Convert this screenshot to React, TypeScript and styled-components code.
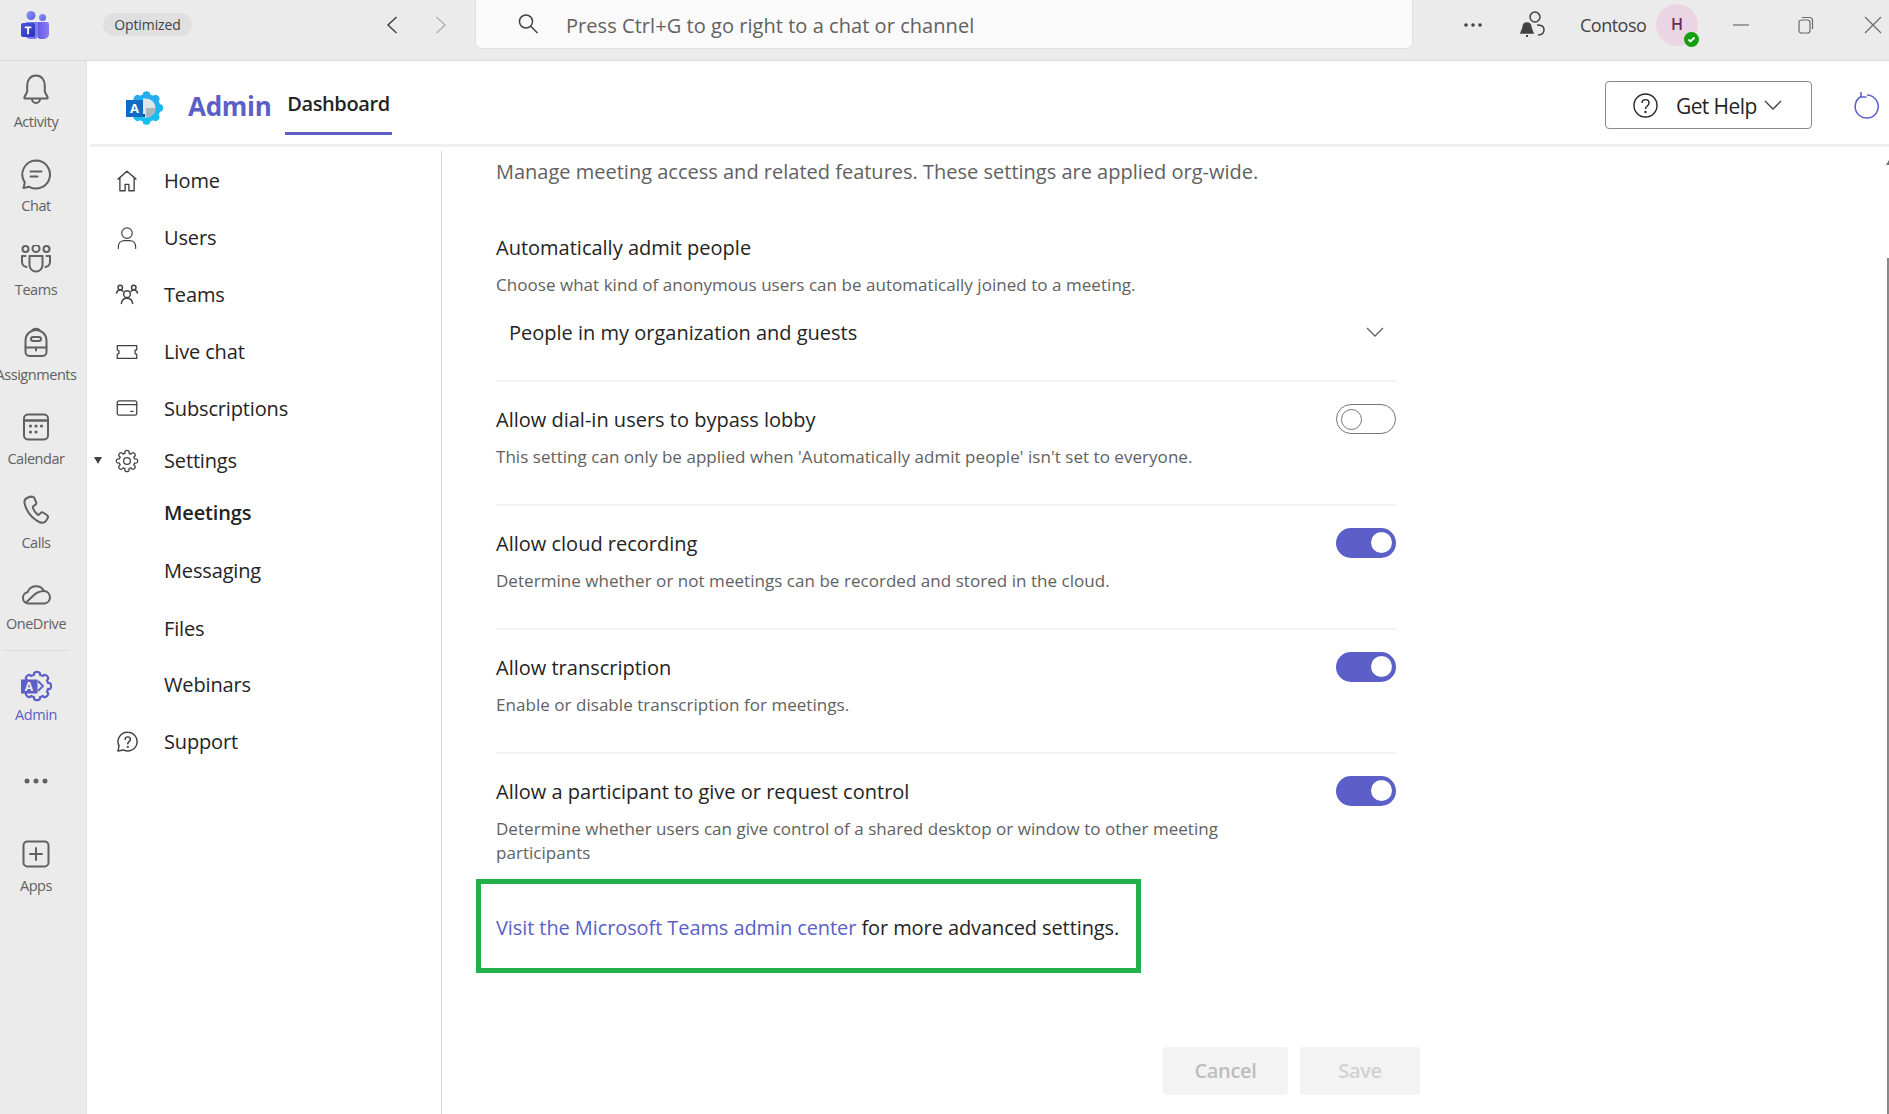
import styled, { createGlobalStyle } from "styled-components";
import { ReactNode } from "react";

const FONT = `"Open Sans", "Noto Sans", sans-serif`;
const BRAND = "#5b5fc7";

//#region styles
const GlobalStyle = createGlobalStyle`
  html, body {
    margin: 0;
    padding: 0;
    height: 100%;
    overflow: hidden;
    background: #ffffff;
  }
  #root {
    height: 100%;
  }
  * {
    box-sizing: border-box;
  }
`;

const Page = styled.div`
  width: 1889px;
  height: 1114px;
  position: relative;
  display: flex;
  flex-direction: column;
  overflow: hidden;
  font-family: ${FONT};
  background: #fff;
`;

const TitleBar = styled.header`
  height: 61px;
  flex: none;
  display: flex;
  align-items: flex-start;
  background: #ebebeb;
  border-bottom: 1px solid #dcdcdc;
`;

const BarSlot = styled.div<{ $ml: number; $w: number }>`
  flex: none;
  margin-left: ${(p) => p.$ml}px;
  width: ${(p) => p.$w}px;
  height: 50px;
  display: flex;
  align-items: center;
  justify-content: center;
  color: #424242;
`;

const Pill = styled.div`
  flex: none;
  margin: 13px 0 0 53px;
  width: 89px;
  height: 23px;
  border-radius: 12px;
  background: #e0e0e0;
  color: #424242;
  font-size: 14px;
  line-height: 23px;
  letter-spacing: -0.1px;
  text-align: center;
`;

const SearchBox = styled.div`
  flex: none;
  margin-left: 26px;
  width: 938px;
  height: 49px;
  display: flex;
  align-items: center;
  padding-left: 41px;
  gap: 27px;
  background: #fafafa;
  border: 1px solid #e0e0e0;
  border-top: none;
  border-radius: 0 0 6px 6px;
  color: #616161;
  font-size: 20px;
  letter-spacing: 0.05px;
`;

const SearchText = styled.span`
  margin-top: 2px;
`;

const Tenant = styled.div`
  flex: none;
  margin-left: 34px;
  width: 68px;
  height: 50px;
  line-height: 50px;
  color: #424242;
  font-size: 18px;
  letter-spacing: -0.5px;
`;

const Avatar = styled.div`
  flex: none;
  position: relative;
  margin: 4px 0 0 8px;
  width: 42px;
  height: 42px;
  border-radius: 50%;
  background: #ecd5e3;
  color: #6b2a5a;
  font-size: 16px;
  font-weight: 600;
  line-height: 40px;
  text-align: center;
`;

const PresenceBadge = styled.div`
  position: absolute;
  right: -1px;
  bottom: -1px;
  width: 15px;
  height: 15px;
  border-radius: 50%;
  background: #13a10e;
  display: flex;
  align-items: center;
  justify-content: center;
`;

const Body = styled.div`
  flex: 1;
  min-height: 0;
  display: flex;
`;

const Rail = styled.nav`
  flex: none;
  width: 87px;
  padding-right: 15px;
  background: #ebebeb;
  border-right: 1px solid #e0e0e0;
  display: flex;
  flex-direction: column;
`;

const RailItem = styled.div<{ $h?: number; $active?: boolean; $iconTop?: number }>`
  height: ${(p) => p.$h ?? 84}px;
  width: 72px;
  flex: none;
  display: flex;
  flex-direction: column;
  align-items: center;
  color: ${(p) => (p.$active ? BRAND : "#616161")};
  svg {
    flex: none;
    margin-top: ${(p) => p.$iconTop ?? 14}px;
  }
`;

const RailLabel = styled.span<{ $gap?: number }>`
  margin-top: ${(p) => p.$gap ?? 5}px;
  font-size: 14.5px;
  line-height: 20px;
  letter-spacing: -0.45px;
  white-space: nowrap;
`;

const RailDivider = styled.div`
  flex: none;
  height: 1px;
  width: 66px;
  margin: 0 3px 7px;
  background: #dcdcdc;
`;

const Main = styled.div`
  flex: 1;
  min-width: 0;
  display: flex;
  flex-direction: column;
`;

const AppHeader = styled.div`
  flex: none;
  height: 86px;
  margin-left: 3px;
  display: flex;
  align-items: flex-start;
  border-bottom: 3px solid #f0f0f0;
`;

const AppLogo = styled.div`
  flex: none;
  margin: 30px 0 0 36px;
  width: 38px;
  height: 34px;
`;

const AppName = styled.div`
  flex: none;
  margin: 26px 0 0 24px;
  width: 97px;
  color: ${BRAND};
  font-size: 26px;
  font-weight: 700;
  line-height: 38px;
  letter-spacing: -0.3px;
`;

const Tab = styled.div`
  flex: none;
  width: 107px;
  height: 74px;
  padding-top: 25px;
  color: #242424;
  font-size: 20px;
  font-weight: 600;
  line-height: 36px;
  letter-spacing: -0.4px;
  text-align: center;
  border-bottom: 3px solid ${BRAND};
`;

const HelpButton = styled.div`
  flex: none;
  margin: 20px 0 0 auto;
  width: 207px;
  height: 48px;
  display: flex;
  align-items: center;
  padding-left: 27px;
  border: 1px solid #8a8a8a;
  border-radius: 4px;
  color: #242424;
  font-size: 21px;
  letter-spacing: -0.6px;
`;

const HelpLabel = styled.span`
  margin: 2px 7px 0 18px;
`;

const RefreshSlot = styled.div`
  flex: none;
  margin: 30px 9px 0 42px;
  width: 26px;
  height: 28px;
  color: ${BRAND};
`;

const Workspace = styled.div`
  flex: 1;
  min-height: 0;
  display: flex;
`;

const SideNav = styled.nav`
  flex: none;
  width: 355px;
  margin-top: 4px;
  padding-top: 1px;
  border-right: 1px solid #d6d6d6;
  display: flex;
  flex-direction: column;
`;

const NavRow = styled.div<{ $h?: number; $bold?: boolean }>`
  flex: none;
  height: ${(p) => p.$h ?? 57}px;
  display: grid;
  grid-template-columns: 28px 24px 1fr;
  align-items: center;
  color: #242424;
  font-size: 20px;
  font-weight: ${(p) => (p.$bold ? 600 : 400)};
  letter-spacing: -0.15px;
`;

const NavCaret = styled.span`
  justify-self: end;
  margin-right: 13px;
  width: 0;
  height: 0;
  border-left: 4px solid transparent;
  border-right: 4px solid transparent;
  border-top: 7px solid #424242;
`;

const NavIcon = styled.span`
  display: flex;
  align-items: center;
  justify-content: center;
  color: #424242;
`;

const NavText = styled.span`
  margin-left: 25px;
`;

const Content = styled.main`
  flex: none;
  width: 900px;
  margin-left: 54px;
  display: flex;
  flex-direction: column;
`;

const Intro = styled.p`
  margin: 9px 0 0;
  color: #616161;
  font-size: 20px;
  line-height: 32px;
`;

const SettingBlock = styled.section<{ $top?: number; $bottom?: number; $divider?: boolean }>`
  flex: none;
  padding: ${(p) => p.$top ?? 24}px 0 ${(p) => p.$bottom ?? 35}px;
  border-bottom: ${(p) => (p.$divider === false ? "none" : "2px solid #f3f3f3")};
`;

const SettingHead = styled.div`
  display: flex;
  align-items: center;
  justify-content: space-between;
  height: 28px;
`;

const SettingTitle = styled.h3`
  margin: 0;
  color: #242424;
  font-size: 20px;
  font-weight: 400;
  line-height: 28px;
`;

const SettingDesc = styled.p`
  margin: 11px 0 0;
  max-width: 740px;
  color: #616161;
  font-size: 17px;
  line-height: 24px;
  letter-spacing: 0.04px;
`;

const Select = styled.div`
  margin-top: 11px;
  height: 48px;
  display: flex;
  align-items: center;
  justify-content: space-between;
  padding: 0 12px 0 13px;
  color: #242424;
  font-size: 20px;
`;

const Toggle = styled.div<{ $on?: boolean }>`
  flex: none;
  width: 60px;
  height: 30px;
  margin-top: -2px;
  border-radius: 15px;
  padding: 4px 4px;
  display: flex;
  justify-content: ${(p) => (p.$on ? "flex-end" : "flex-start")};
  background: ${(p) => (p.$on ? BRAND : "#fff")};
  border: ${(p) => (p.$on ? "none" : "1.5px solid #757575")};
`;

const ToggleKnob = styled.span<{ $on?: boolean }>`
  width: 21px;
  height: 21px;
  border-radius: 50%;
  background: ${(p) => (p.$on ? "#fff" : "transparent")};
  border: ${(p) => (p.$on ? "none" : "1.5px solid #757575")};
  margin-top: ${(p) => (p.$on ? 0 : -0.5)}px;
`;

const Callout = styled.div`
  flex: none;
  margin: 14px 0 0 -20px;
  width: 665px;
  height: 94px;
  display: flex;
  align-items: center;
  padding: 2px 0 0 15px;
  border: 5px solid #22b14c;
  color: #242424;
  font-size: 20px;
  letter-spacing: -0.09px;
  white-space: pre;
`;

const CalloutLink = styled.a`
  color: ${BRAND};
`;

const ActionRow = styled.div`
  flex: none;
  margin: 74px -24px 0 0;
  display: flex;
  justify-content: flex-end;
  gap: 12px;
`;

const ActionButton = styled.div<{ $w: number; $faint?: boolean }>`
  width: ${(p) => p.$w}px;
  height: 48px;
  border-radius: 4px;
  background: #f3f3f3;
  color: ${(p) => (p.$faint ? "#d1d1d1" : "#bdbdbd")};
  font-size: 20px;
  font-weight: 600;
  line-height: 47px;
  letter-spacing: -0.3px;
  text-align: center;
`;

const ScrollThumb = styled.div`
  position: absolute;
  right: 0;
  top: 258px;
  bottom: 0;
  width: 2px;
  background: #8a8a8a;
`;

const ScrollArrow = styled.div`
  position: absolute;
  right: 0;
  top: 160px;
  width: 0;
  height: 0;
  border-left: 3px solid transparent;
  border-bottom: 5px solid #6e6e6e;
`;
//#endregion styles

// cog outline, used by the settings and admin icons
function gearPath(cx: number, cy: number, outer: number, inner: number, teeth: number) {
  const step = (Math.PI * 2) / teeth;
  const pts: string[] = [];
  for (let i = 0; i < teeth; i++) {
    const a = i * step - Math.PI / 2;
    const at = (r: number, d: number) => `${(cx + r * Math.cos(a + d)).toFixed(2)} ${(cy + r * Math.sin(a + d)).toFixed(2)}`;
    pts.push(`${i === 0 ? "M" : "L"}${at(inner, -step * 0.34)}`);
    pts.push(`Q${at(outer, -step * 0.3)} ${at(outer, -step * 0.12)}`);
    pts.push(`Q${at(outer + 0.5, 0)} ${at(outer, step * 0.12)}`);
    pts.push(`Q${at(outer, step * 0.3)} ${at(inner, step * 0.34)}`);
  }
  return pts.join(" ") + "Z";
}

function Icon({ size = 32, sw = 2, children }: { size?: number; sw?: number; children: ReactNode }) {
  return (
    <svg width={size} height={size} viewBox="0 0 32 32" fill="none" stroke="currentColor" strokeWidth={sw} strokeLinecap="round" strokeLinejoin="round">
      {children}
    </svg>
  );
}

const TeamsLogo = () => (
  <svg width="30" height="31" viewBox="0 0 30 31">
    <defs>
      <linearGradient id="tl1" x1="0" y1="0" x2="1" y2="1">
        <stop offset="0" stopColor="#8f93f5" />
        <stop offset="1" stopColor="#5b5fe8" />
      </linearGradient>
      <linearGradient id="tl2" x1="0" y1="0" x2="1" y2="1">
        <stop offset="0" stopColor="#4a55e0" />
        <stop offset="1" stopColor="#2a2fb8" />
      </linearGradient>
      <linearGradient id="tl3" x1="0" y1="0" x2="1" y2="0">
        <stop offset="0" stopColor="#6a5be8" />
        <stop offset="1" stopColor="#8a7cf2" />
      </linearGradient>
    </defs>
    <circle cx="11" cy="5.5" r="4.5" fill="url(#tl1)" />
    <circle cx="22.5" cy="7.5" r="3.5" fill="url(#tl1)" />
    <path d="M18 12h9a2 2 0 0 1 2 2v10a5 5 0 0 1-5 5h-3a4 4 0 0 1-3-1z" fill="url(#tl3)" />
    <path d="M6 12h12v13a4 4 0 0 1-4 4H10a4 4 0 0 1-4-4z" fill="#7b7ff0" />
    <rect x="1" y="13" width="14" height="14" rx="2" fill="url(#tl2)" />
    <path d="M4.8 16.6h6.6v1.7H9v6H7.200v-6H4.800z" fill="#fff" />
  </svg>
);

const AdminLogo = () => (
  <svg width="38" height="34" viewBox="0 0 38 34">
    <defs>
      <linearGradient id="al1" x1="0" y1="0" x2="0" y2="1">
        <stop offset="0" stopColor="#2aa8ee" />
        <stop offset="1" stopColor="#13c3f0" />
      </linearGradient>
    </defs>
    <path d={gearPath(20.5, 17, 16.5, 14, 8)} fill="url(#al1)" />
    <path d="M17 7.500h3a9.500 9.500 0 0 1 0 19h-3z" fill="#dfe6ea" />
    <path d="M20 17h9.500a9.500 9.500 0 0 1-9.500 9.500z" fill="#aab6bf" />
    <rect x="0" y="9" width="17" height="17" fill="#0f6cc4" />
    <path d="M17 23h2v3h-2z" fill="#0a4f95" />
    <text x="8.500" y="22" textAnchor="middle" fontFamily={FONT} fontSize="13" fontWeight="700" fill="#fff">
      A
    </text>
  </svg>
);

const BellIcon = () => (
  <Icon>
    <path d="M16 2.500c-5.500 0-8.800 4.500-8.800 10v6L4.400 24.300c-.3.600.1 1.200.7 1.200h21.800c.6 0 1-.6.7-1.200l-2.800-5.800v-6c0-5.500-3.300-10-8.800-10z" />
    <path d="M12 26a4 4 0 0 0 8 0" />
  </Icon>
);

const ChatIcon = () => (
  <Icon>
    <path d="M16 1.500a14 14 0 1 1-6.700 26.300L3.500 29l1.300-5.600A14 14 0 0 1 16 1.500z" />
    <path d="M10.500 12.500h11M10.500 17.500h7" />
  </Icon>
);

const TeamsIcon = () => (
  <Icon>
    <circle cx="5.500" cy="4" r="3" />
    <circle cx="16" cy="3.500" r="3.500" />
    <circle cx="26.500" cy="4" r="3" />
    <path d="M9.500 11h13v9a6.500 6.500 0 0 1-13 0z" />
    <path d="M5.500 11H2v6a5 5 0 0 0 4.500 5M26.500 11H30v6a5 5 0 0 1-4.500 5" />
  </Icon>
);

const BagIcon = () => (
  <Icon>
    <path d="M5.500 14.500a10.500 10.500 0 0 1 21 0V26a4 4 0 0 1-4 4h-13a4 4 0 0 1-4-4z" />
    <path d="M12.500 4.500c.5-2.500 6.500-2.500 7 0" />
    <rect x="11" y="11" width="10" height="4" rx="2" />
    <path d="M5.500 21.500h21M16 21.500v3" />
  </Icon>
);

const CalendarIcon = () => (
  <svg width="32" height="32" viewBox="0 0 32 32" fill="none" stroke="currentColor" strokeWidth="2">
    <rect x="4" y="3.500" width="24" height="25" rx="4" />
    <path d="M4 9.500h24" strokeWidth="2.500" />
    <g fill="currentColor" stroke="none">
      <circle cx="10.500" cy="15" r="1.600" />
      <circle cx="16" cy="15" r="1.600" />
      <circle cx="21.500" cy="15" r="1.600" />
      <circle cx="10.500" cy="21" r="1.600" />
      <circle cx="16" cy="21" r="1.600" />
    </g>
  </svg>
);

const PhoneIcon = () => (
  <Icon>
    <path d="M10.500 2.500 7 4C4.500 5.200 4 8 5 11c2.200 7.300 7.400 13.400 14.200 17 2.800 1.300 5.700.800 7.100-1.500l1.400-2.400c.6-1 .3-2.200-.6-2.900l-3.600-2.500c-.9-.6-2-.5-2.800.2l-1.500 1.500c-.6.500-1.400.5-2-.1-2-1.800-3.500-4-4.300-6.500-.2-.7 0-1.400.6-1.800l1.800-1.200c.9-.6 1.200-1.700.8-2.700l-1.800-4.100c-.4-1.100-1.500-1.400-2.300-1z" />
  </Icon>
);

const CloudIcon = () => (
  <Icon>
    <path d="M8.500 25.500a5.700 5.700 0 0 1-.9-11.300A9 9 0 0 1 24 13a6.300 6.300 0 0 1 .7 12.500z" />
    <path d="M6 24.500 14 17c3-2.800 6-3.800 10-4" />
  </Icon>
);

const AdminRailIcon = () => (
  <svg width="32" height="32" viewBox="0 0 32 32" fill="none">
    <path d={gearPath(17, 16, 14, 11.500, 8)} stroke="currentColor" strokeWidth="2.200" />
    <path d="M18 11l5 5-5 5" stroke="currentColor" strokeWidth="1.800" />
    <rect x="1" y="9.500" width="16.500" height="14" fill="currentColor" />
    <text x="9" y="21" textAnchor="middle" fontFamily={FONT} fontSize="12" fontWeight="700" fill="#ebebeb" stroke="none">
      A
    </text>
  </svg>
);

const DotsIcon = ({ color, gap = 9, r = 2.500 }: { color: string; gap?: number; r?: number }) => (
  <svg width="32" height="10" viewBox="0 0 32 10" fill={color}>
    <circle cx={16 - gap} cy="5" r={r} />
    <circle cx="16" cy="5" r={r} />
    <circle cx={16 + gap} cy="5" r={r} />
  </svg>
);

const AppsIcon = () => (
  <Icon>
    <rect x="3.500" y="3.500" width="25" height="25" rx="4" />
    <path d="M16 10v12M10 16h12" />
  </Icon>
);

const navIcons: Record<string, ReactNode> = {
  home: (
    <Icon size={26} sw={1.800}>
      <path d="M4 13.500 16 3l12 10.500M6.500 11.500V29h7v-8.500h5V29h7V11.500" />
    </Icon>
  ),
  user: (
    <Icon size={30} sw={1.600}>
      <circle cx="16" cy="9.500" r="7" />
      <path d="M4.500 30v-2.500c0-5 3.500-8 8-8h7c4.500 0 8 3 8 8V30" />
    </Icon>
  ),
  teams: (
    <Icon size={27} sw={2}>
      <circle cx="7" cy="6.500" r="3" />
      <circle cx="25" cy="6.500" r="3" />
      <circle cx="16" cy="15.500" r="4.500" />
      <path d="M2 14c.5-2.500 2-4 5-4 1.500 0 2.500.5 3.500 1.500M30 14c-.5-2.500-2-4-5-4-1.500 0-2.500.5-3.500 1.500M8.500 28c.5-4 3.500-7 7.500-7s7 3 7.500 7" />
    </Icon>
  ),
  ticket: (
    <Icon size={28} sw={1.700}>
      <path d="M3 7.500h26v5.500c-1.500 0-2.500 1.200-2.500 3s1 3 2.500 3v5.500H3V19c1.500 0 2.500-1.200 2.500-3S4.500 14 3 13z" />
    </Icon>
  ),
  card: (
    <Icon size={28} sw={1.700}>
      <rect x="3" y="6.500" width="26" height="19" rx="2.500" />
      <path d="M3 11.500h26M21 20.500h3" />
    </Icon>
  ),
  gear: (
    <svg width="28" height="28" viewBox="0 0 32 32" fill="none" stroke="currentColor" strokeWidth="1.700">
      <path d={gearPath(16, 16, 14, 10.500, 8)} />
      <circle cx="16" cy="16" r="4.500" />
    </svg>
  ),
  help: (
    <Icon size={26} sw={1.900}>
      <path d="M17 3a12.500 12.500 0 1 1-5.800 23.600L4 28l1.400-6.800A12.500 12.500 0 0 1 17 3z" />
      <path d="M13.500 12.500c0-4.500 7-4.500 7 0 0 3-3.500 3-3.500 6" />
      <circle cx="17" cy="22.500" r=".6" />
    </Icon>
  ),
};

const railItems: { label: string; icon: ReactNode; h?: number; iconTop?: number; gap?: number }[] = [
  { label: "Activity", icon: <BellIcon />, iconTop: 12, gap: 7 },
  { label: "Chat", icon: <ChatIcon /> },
  { label: "Teams", icon: <TeamsIcon />, h: 85, iconTop: 16, gap: 3 },
  { label: "Assignments", icon: <BagIcon />, iconTop: 12, gap: 7 },
  { label: "Calendar", icon: <CalendarIcon />, iconTop: 13, gap: 6 },
  { label: "Calls", icon: <PhoneIcon />, iconTop: 12, gap: 7 },
  { label: "OneDrive", icon: <CloudIcon />, iconTop: 12, gap: 4 },
];

const navItems: { label: string; icon?: string; h?: number; bold?: boolean; caret?: boolean }[] = [
  { label: "Home", icon: "home" },
  { label: "Users", icon: "user" },
  { label: "Teams", icon: "teams" },
  { label: "Live chat", icon: "ticket" },
  { label: "Subscriptions", icon: "card", h: 56 },
  { label: "Settings", icon: "gear", h: 49, caret: true },
  { label: "Meetings", bold: true, h: 55 },
  { label: "Messaging", h: 60 },
  { label: "Files", h: 56 },
  { label: "Webinars" },
  { label: "Support", icon: "help" },
];

const settings: { title: string; desc: string; on: boolean }[] = [
  { title: "Allow dial-in users to bypass lobby", desc: "This setting can only be applied when 'Automatically admit people' isn't set to everyone.", on: false },
  { title: "Allow cloud recording", desc: "Determine whether or not meetings can be recorded and stored in the cloud.", on: true },
  { title: "Allow transcription", desc: "Enable or disable transcription for meetings.", on: true },
  {
    title: "Allow a participant to give or request control",
    desc: "Determine whether users can give control of a shared desktop or window to other meeting participants",
    on: true,
  },
];

export default function App() {
  return (
    <Page>
      <GlobalStyle />
      <TitleBar>
        <BarSlot $ml={20} $w={30}>
          <TeamsLogo />
        </BarSlot>
        <Pill>Optimized</Pill>
        <BarSlot $ml={192} $w={16}>
          <svg width="12" height="18" viewBox="0 0 12 18" fill="none" stroke="#424242" strokeWidth="1.500">
            <path d="M10.500 1 2 9l8.500 8" />
          </svg>
        </BarSlot>
        <BarSlot $ml={33} $w={16}>
          <svg width="12" height="18" viewBox="0 0 12 18" fill="none" stroke="#b3b3b3" strokeWidth="1.500">
            <path d="M1.500 1 10 9l-8.500 8" />
          </svg>
        </BarSlot>
        <SearchBox>
          <svg width="22" height="22" viewBox="0 0 22 22" fill="none" stroke="#424242" strokeWidth="1.500">
            <circle cx="9" cy="8.500" r="6.500" />
            <path d="m14 13.500 6.500 6.500" />
          </svg>
          <SearchText>Press Ctrl+G to go right to a chat or channel</SearchText>
        </SearchBox>
        <BarSlot $ml={44} $w={32}>
          <DotsIcon color="#424242" gap={7} r={1.800} />
        </BarSlot>
        <BarSlot $ml={31} $w={26}>
          <svg width="26" height="30" viewBox="0 0 26 30" fill="none" stroke="#424242" strokeWidth="1.500">
            <circle cx="15" cy="7" r="5" />
            <path d="M17 15c4 0 7 1.500 7 4.500 0 3-2 5.500-6 5.500" />
            <path d="M7 13c-3 0-4 2.500-4 5l-2 5h12l-2-5c0-2.500-1-5-4-5z" fill="#424242" />
            <path d="M6 26h2" strokeWidth="2" />
          </svg>
        </BarSlot>
        <Tenant>Contoso</Tenant>
        <Avatar>
          H
          <PresenceBadge>
            <svg width="9" height="9" viewBox="0 0 9 9" fill="none" stroke="#fff" strokeWidth="1.800">
              <path d="m1.500 4.500 2 2 4-4" />
            </svg>
          </PresenceBadge>
        </Avatar>
        <BarSlot $ml={35} $w={16}>
          <svg width="16" height="16" viewBox="0 0 16 16" stroke="#6b6b6b" strokeWidth="1.200">
            <path d="M0 8h16" />
          </svg>
        </BarSlot>
        <BarSlot $ml={49} $w={16}>
          <svg width="16" height="18" viewBox="0 0 16 18" fill="none" stroke="#6b6b6b" strokeWidth="1.200">
            <rect x="1" y="4" width="11" height="13" rx="2.500" />
            <path d="M4 1.500h7.500A3 3 0 0 1 14.500 4.500V13" />
          </svg>
        </BarSlot>
        <BarSlot $ml={50} $w={18}>
          <svg width="18" height="18" viewBox="0 0 18 18" stroke="#6b6b6b" strokeWidth="1.200">
            <path d="m1 1 16 16M17 1 1 17" />
          </svg>
        </BarSlot>
      </TitleBar>
      <Body>
        <Rail>
          {railItems.map((item) => (
            <RailItem key={item.label} $h={item.h} $iconTop={item.iconTop}>
              {item.icon}
              <RailLabel $gap={item.gap}>{item.label}</RailLabel>
            </RailItem>
          ))}
          <RailDivider />
          <RailItem $active $h={86} $iconTop={12}>
            <AdminRailIcon />
            <RailLabel $gap={3}>Admin</RailLabel>
          </RailItem>
          <RailItem $h={82} $iconTop={32}>
            <DotsIcon color="#616161" />
          </RailItem>
          <RailItem $iconTop={12}>
            <AppsIcon />
            <RailLabel $gap={6}>Apps</RailLabel>
          </RailItem>
        </Rail>
        <Main>
          <AppHeader>
            <AppLogo>
              <AdminLogo />
            </AppLogo>
            <AppName>Admin</AppName>
            <Tab>Dashboard</Tab>
            <HelpButton>
              <svg width="25" height="25" viewBox="0 0 25 25" fill="none" stroke="#242424" strokeWidth="1.400">
                <circle cx="12.500" cy="12.500" r="11.500" />
                <path d="M9 10c0-4.500 7-4.500 7 0 0 3-3.500 3-3.500 6" />
                <circle cx="12.500" cy="19" r=".5" />
              </svg>
              <HelpLabel>Get Help</HelpLabel>
              <svg width="18" height="10" viewBox="0 0 18 10" fill="none" stroke="#424242" strokeWidth="1.300">
                <path d="m1 1 8 8 8-8" />
              </svg>
            </HelpButton>
            <RefreshSlot>
              <svg width="26" height="28" viewBox="0 0 26 28" fill="none" stroke="currentColor" strokeWidth="1.500">
                <path d="M7 5.500a11.500 11.500 0 1 0 6-1.500" />
                <path d="M7 1v5h5.500" />
              </svg>
            </RefreshSlot>
          </AppHeader>
          <Workspace>
            <SideNav>
              {navItems.map((item) => (
                <NavRow key={item.label} $h={item.h} $bold={item.bold}>
                  {item.caret ? <NavCaret /> : <span />}
                  <NavIcon>{item.icon ? navIcons[item.icon] : null}</NavIcon>
                  <NavText>{item.label}</NavText>
                </NavRow>
              ))}
            </SideNav>
            <Content>
              <Intro>Manage meeting access and related features. These settings are applied org-wide.</Intro>
              <SettingBlock $top={46} $bottom={24}>
                <SettingHead>
                  <SettingTitle>Automatically admit people</SettingTitle>
                </SettingHead>
                <SettingDesc>Choose what kind of anonymous users can be automatically joined to a meeting.</SettingDesc>
                <Select>
                  People in my organization and guests
                  <svg width="18" height="10" viewBox="0 0 18 10" fill="none" stroke="#616161" strokeWidth="1.300">
                    <path d="m1 1 8 8 8-8" />
                  </svg>
                </Select>
              </SettingBlock>
              {settings.map((s, i) => (
                <SettingBlock key={s.title} $divider={i < settings.length - 1} $bottom={i < settings.length - 1 ? 35 : 0}>
                  <SettingHead>
                    <SettingTitle>{s.title}</SettingTitle>
                    <Toggle $on={s.on}>
                      <ToggleKnob $on={s.on} />
                    </Toggle>
                  </SettingHead>
                  <SettingDesc>{s.desc}</SettingDesc>
                </SettingBlock>
              ))}
              <Callout>
                <CalloutLink>Visit the Microsoft Teams admin center</CalloutLink> for more advanced settings.
              </Callout>
              <ActionRow>
                <ActionButton $w={125}>Cancel</ActionButton>
                <ActionButton $w={120} $faint>
                  Save
                </ActionButton>
              </ActionRow>
            </Content>
          </Workspace>
        </Main>
      </Body>
      <ScrollArrow />
      <ScrollThumb />
    </Page>
  );
}
